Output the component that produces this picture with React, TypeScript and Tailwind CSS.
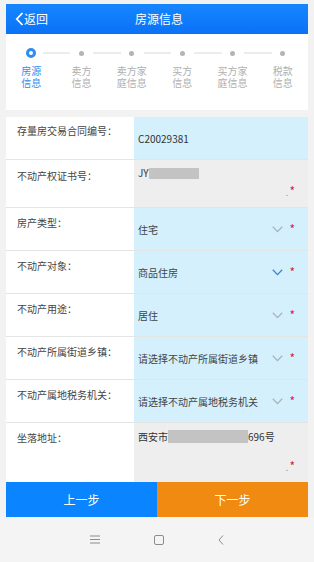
import React from 'react';

const steps = [
  { top: '房源', bottom: '信息', active: true },
  { top: '卖方', bottom: '信息' },
  { top: '卖方家', bottom: '庭信息' },
  { top: '买方', bottom: '信息' },
  { top: '买方家', bottom: '庭信息' },
  { top: '税款', bottom: '信息' },
];

function Chevron({ blue }: { blue?: boolean }) {
  return (
    <svg width="11" height="7" viewBox="0 0 11 7" className="shrink-0">
      <path d="M0.8 0.8 L5.5 5.6 L10.2 0.8" fill="none" stroke={blue ? '#3b7fd6' : '#a9b3bb'} strokeWidth="1.3" />
    </svg>
  );
}

function Star() {
  return <span className="ml-[6px] text-[12px] leading-none text-[#d3214f]">*</span>;
}

function SelectRow({ label, value, blue }: { label: string; value: string; blue?: boolean }) {
  return (
    <div className="flex h-[43px] border-t border-[#e4e4e4]">
      <div className="w-[128px] shrink-0 pl-[11px] pt-[9px] text-[10px] leading-[12px] text-[#444]">{label}</div>
      <div className="flex flex-1 items-center bg-[#d3f0fc] pl-[4px] pr-[13px]">
        <span className="flex-1 text-[10px] text-[#444]">{value}</span>
        <Chevron blue={blue} />
        <Star />
      </div>
    </div>
  );
}

export default function App() {
  return (
    <div
      className="flex h-[562px] w-[314px] flex-col bg-[#f2f2f2] pt-[4px]"
      style={{ fontFamily: '"Noto Sans CJK SC", "Noto Sans", Roboto, sans-serif' }}
    >
      <div className="mx-[6px] flex flex-1 flex-col">
        {/* header */}
        <div className="relative flex h-[30px] items-center justify-center bg-gradient-to-b from-[#1686ff] to-[#0a72f6] text-white">
          <div className="absolute left-[9px] top-0 flex h-full items-center">
            <svg width="9" height="14" viewBox="0 0 9 14">
              <path d="M7.5 1 L1.8 7 L7.5 13" fill="none" stroke="white" strokeWidth="1.8" />
            </svg>
            <span className="text-[12px]">返回</span>
          </div>
          <span className="ml-[4px] text-[12px]">房源信息</span>
        </div>

        {/* steps */}
        <div className="grid h-[76px] grid-cols-6 bg-white pt-[14px]">
          {steps.map((s, i) => (
            <div key={i} className="relative flex flex-col items-center">
              <div className="flex h-[10px] items-center justify-center">
                {s.active ? (
                  <div className="h-[10px] w-[10px] rounded-full border-[3px] border-[#2f8cf0] bg-white" />
                ) : (
                  <div className="h-[5px] w-[5px] rounded-full bg-[#b4b4b4]" />
                )}
              </div>
              {i < steps.length - 1 && (
                <div className="absolute left-[calc(50%+12px)] right-[calc(-50%+11px)] top-[4px] h-[2px] bg-[#ececec]" />
              )}
              <div
                className={`mt-[7px] text-center text-[10px] leading-[12px] ${s.active ? 'text-[#2f8cf0]' : 'text-[#b0b0b0]'}`}
              >
                <div>{s.top}</div>
                <div>{s.bottom}</div>
              </div>
            </div>
          ))}
        </div>

        {/* form */}
        <div className="mt-[7px] flex flex-1 flex-col bg-white">
          <div className="flex h-[42px]">
            <div className="w-[128px] shrink-0 pl-[11px] pt-[8px] text-[10px] leading-[12px] text-[#444]">存量房交易合同编号：</div>
            <div className="flex flex-1 items-center bg-[#d3f0fc] pl-[4px] text-[10px] text-[#333]">C20029381</div>
          </div>

          <div className="flex h-[48px] border-t border-[#e4e4e4]">
            <div className="w-[128px] shrink-0 pl-[11px] pt-[10px] text-[10px] leading-[12px] text-[#444]">不动产权证书号：</div>
            <div className="flex flex-1 flex-col bg-[#eeeeee] pl-[4px] pr-[13px] pt-[7px]">
              <div className="flex items-center text-[10px] leading-[12px] text-[#333]">
                <span>JY</span>
                <span className="h-[11px] w-[50px] bg-[#c3c3c3]" />
              </div>
              <div className="mt-[6px] flex items-end justify-end leading-none">
                <span className="mr-[1px] text-[10px] text-[#999]">.</span>
                <span className="text-[12px] text-[#d3214f]">*</span>
              </div>
            </div>
          </div>

          <SelectRow label="房产类型：" value="住宅" />
          <SelectRow label="不动产对象：" value="商品住房" blue />
          <SelectRow label="不动产用途：" value="居住" />
          <SelectRow label="不动产所属街道乡镇：" value="请选择不动产所属街道乡镇" />
          <SelectRow label="不动产属地税务机关：" value="请选择不动产属地税务机关" />

          <div className="flex flex-1 border-t border-[#e4e4e4]">
            <div className="w-[128px] shrink-0 pl-[11px] pt-[9px] text-[10px] leading-[12px] text-[#444]">坐落地址：</div>
            <div className="flex flex-1 flex-col bg-[#eeeeee] pl-[4px] pr-[13px] pt-[7px]">
              <div className="flex items-center text-[10px] leading-[12px] text-[#333]">
                <span>西安市</span>
                <span className="h-[13px] w-[80px] bg-[#c3c3c3]" />
                <span>696号</span>
              </div>
              <div className="mt-[17px] flex items-end justify-end leading-none">
                <span className="mr-[1px] text-[10px] text-[#999]">.</span>
                <span className="text-[12px] text-[#d3214f]">*</span>
              </div>
            </div>
          </div>
        </div>

        {/* buttons */}
        <div className="flex h-[35px]">
          <button className="flex-1 bg-[#0a84ff] text-[12px] text-white">上一步</button>
          <button className="flex-1 bg-[#f18a11] text-[12px] text-white">下一步</button>
        </div>
      </div>

      {/* nav bar */}
      <div className="flex h-[45px] shrink-0 items-center justify-center gap-[54px] bg-[#f4f4f4]">
        <svg width="10" height="9" viewBox="0 0 10 9">
          <path d="M0 1 H10 M0 4.5 H10 M0 8 H10" stroke="#8c8c8c" strokeWidth="1" />
        </svg>
        <svg width="10" height="10" viewBox="0 0 10 10">
          <rect x="0.5" y="0.5" width="9" height="9" rx="1.5" fill="none" stroke="#8c8c8c" strokeWidth="1" />
        </svg>
        <svg width="6" height="10" viewBox="0 0 6 10">
          <path d="M5 0.5 L1 5 L5 9.5" fill="none" stroke="#8c8c8c" strokeWidth="1" />
        </svg>
      </div>
    </div>
  );
}
